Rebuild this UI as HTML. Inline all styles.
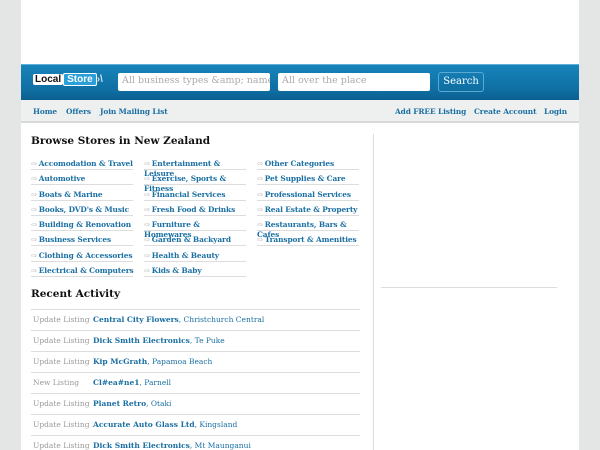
<!DOCTYPE html>
<html><head><style>
*{margin:0;padding:0;box-sizing:border-box}
html,body{width:600px;height:450px;overflow:hidden}
body{background:#e4e6e5;font-family:"DejaVu Serif","Liberation Serif",serif;position:relative}
.wrap{position:absolute;left:21px;width:558px;top:0;height:450px;background:#fff}
.bar{position:absolute;left:21px;width:558px;top:64px;height:36px;background:linear-gradient(#1784bb,#0f6fa3 70%,#0b5f8f);border-top:1px solid #5ab0d8}
.in{position:absolute;top:73px;height:18px;background:#fff;border-radius:2px;font-size:9.5px;color:#aaa;padding:2px 4px;white-space:nowrap;overflow:hidden}
.btn{position:absolute;left:438px;top:72px;width:46px;height:20px;border:1px solid #5aa9d3;border-radius:3px;color:#fff;font-size:10px;text-align:center;line-height:18px}
.nav{position:absolute;left:21px;width:558px;top:100px;height:23px;background:#eef0f0;border-bottom:2px solid #d8dada;font-size:7.4px;font-weight:bold;color:#1a6fa3;letter-spacing:-0.1px}
.nav span{position:absolute;top:7px}
h2{position:absolute;font-size:10.5px;font-weight:bold;color:#111}
.cat{position:absolute;width:102px;height:15px;border-bottom:1px solid #ddd;font-size:7.4px;font-weight:bold;color:#1a6fa3;line-height:9px;padding-top:4px;white-space:nowrap;letter-spacing:-0.1px}
.cat i{font-style:normal;color:#aaa;font-weight:normal;font-size:7px;margin-right:2px}
.row{position:absolute;left:31px;width:329px;height:21px;border-top:1px solid #ddd;font-size:7.5px;line-height:20px;color:#1a6fa3}
.row .t{position:absolute;left:2px;color:#999}
.row .n{position:absolute;left:62px}
</style></head><body>
<div class="wrap"></div>
<div class="bar"></div>
<div style="position:absolute;left:33px;top:74px;font-family:'Liberation Sans',sans-serif;font-size:10px;font-weight:bold">
<span style="background:#fff;color:#111;padding:0 2px;border-radius:2px">Local</span><span style="background:#2b9fd9;color:#fff;padding:0 3px;border:1px solid #fff;border-radius:2px">Store</span><span style="color:#cfe6f4">›\</span></div>
<div class="in" style="left:118px;width:152px">All business types &amp;amp; name</div>
<div class="in" style="left:278px;width:152px">All over the place</div>
<div class="btn">Search</div>
<div class="nav">
<span style="left:12px">Home</span><span style="left:45px">Offers</span><span style="left:79px">Join Mailing List</span>
<span style="left:374px">Add FREE Listing</span><span style="left:453px">Create Account</span><span style="left:523px">Login</span></div>
<div style="position:absolute;left:373px;top:134px;width:1px;height:316px;background:#ddd"></div>
<div style="position:absolute;left:381px;top:287px;width:176px;height:1px;background:#ddd"></div>
<h2 style="left:31px;top:135px">Browse Stores in New Zealand</h2>
<div class="cat" style="left:31px;top:155px"><i>⇨</i>Accomodation &amp; Travel</div>
<div class="cat" style="left:31px;top:170px"><i>⇨</i>Automotive</div>
<div class="cat" style="left:31px;top:186px"><i>⇨</i>Boats &amp; Marine</div>
<div class="cat" style="left:31px;top:201px"><i>⇨</i>Books, DVD's &amp; Music</div>
<div class="cat" style="left:31px;top:216px"><i>⇨</i>Building &amp; Renovation</div>
<div class="cat" style="left:31px;top:231px"><i>⇨</i>Business Services</div>
<div class="cat" style="left:31px;top:247px"><i>⇨</i>Clothing &amp; Accessories</div>
<div class="cat" style="left:31px;top:262px"><i>⇨</i>Electrical &amp; Computers</div>
<div class="cat" style="left:144px;top:155px;white-space:normal"><i>⇨</i>Entertainment &amp; Leisure</div>
<div class="cat" style="left:144px;top:170px;white-space:normal"><i>⇨</i>Exercise, Sports &amp; Fitness</div>
<div class="cat" style="left:144px;top:186px"><i>⇨</i>Financial Services</div>
<div class="cat" style="left:144px;top:201px"><i>⇨</i>Fresh Food &amp; Drinks</div>
<div class="cat" style="left:144px;top:216px;white-space:normal"><i>⇨</i>Furniture &amp; Homewares</div>
<div class="cat" style="left:144px;top:231px"><i>⇨</i>Garden &amp; Backyard</div>
<div class="cat" style="left:144px;top:247px"><i>⇨</i>Health &amp; Beauty</div>
<div class="cat" style="left:144px;top:262px"><i>⇨</i>Kids &amp; Baby</div>
<div class="cat" style="left:257px;top:155px"><i>⇨</i>Other Categories</div>
<div class="cat" style="left:257px;top:170px"><i>⇨</i>Pet Supplies &amp; Care</div>
<div class="cat" style="left:257px;top:186px"><i>⇨</i>Professional Services</div>
<div class="cat" style="left:257px;top:201px"><i>⇨</i>Real Estate &amp; Property</div>
<div class="cat" style="left:257px;top:216px;white-space:normal"><i>⇨</i>Restaurants, Bars &amp; Cafes</div>
<div class="cat" style="left:257px;top:231px"><i>⇨</i>Transport &amp; Amenities</div>
<h2 style="left:31px;top:288px">Recent Activity</h2>
<div class="row" style="top:309px"><span class="t">Update Listing</span><span class="n"><b>Central City Flowers</b>, Christchurch Central</span></div>
<div class="row" style="top:330px"><span class="t">Update Listing</span><span class="n"><b>Dick Smith Electronics</b>, Te Puke</span></div>
<div class="row" style="top:351px"><span class="t">Update Listing</span><span class="n"><b>Kip McGrath</b>, Papamoa Beach</span></div>
<div class="row" style="top:372px"><span class="t">New Listing</span><span class="n"><b>Cl#ea#ne1</b>, Parnell</span></div>
<div class="row" style="top:393px"><span class="t">Update Listing</span><span class="n"><b>Planet Retro</b>, Otaki</span></div>
<div class="row" style="top:414px"><span class="t">Update Listing</span><span class="n"><b>Accurate Auto Glass Ltd</b>, Kingsland</span></div>
<div class="row" style="top:435px"><span class="t">Update Listing</span><span class="n"><b>Dick Smith Electronics</b>, Mt Maunganui</span></div>
</body></html>
